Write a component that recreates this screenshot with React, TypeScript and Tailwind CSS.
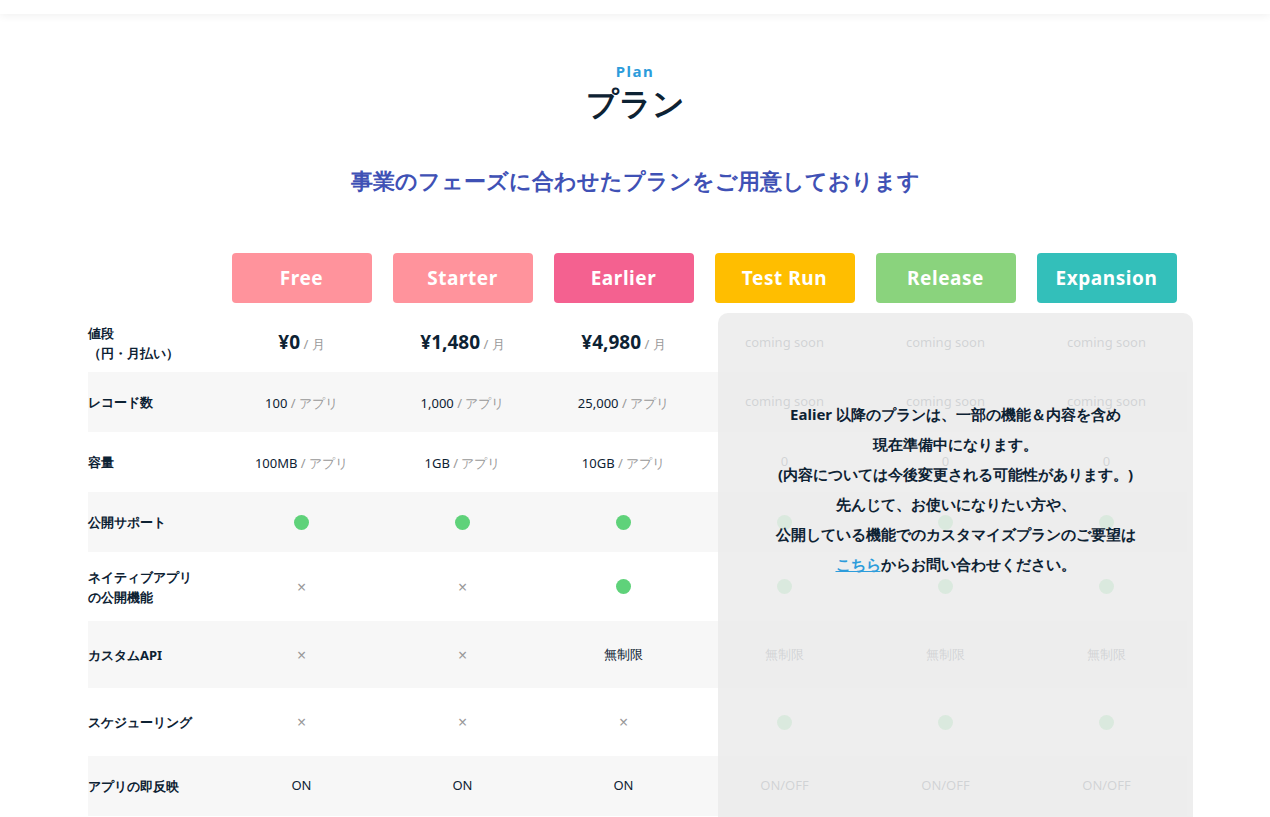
const font = "[font-family:Roboto,'Noto_Sans_CJK_JP',sans-serif]";

const plans = [
  { name: 'Free', color: 'bg-[#ff939c]' },
  { name: 'Starter', color: 'bg-[#ff939c]' },
  { name: 'Earlier', color: 'bg-[#f46190]' },
  { name: 'Test Run', color: 'bg-[#ffbe00]' },
  { name: 'Release', color: 'bg-[#8ad37d]' },
  { name: 'Expansion', color: 'bg-[#33bfba]' },
];

const Dot = () => <span className="inline-block size-[15px] rounded-full bg-[#5fd27a]" />;
const X = () => <span className="text-[16px] text-[#9a9a9a]">×</span>;
const Unit = ({ v, u, big }: { v: string; u: string; big?: boolean }) => (
  <span>
    <span className={big ? 'text-[19px] font-bold text-[#0d2233]' : 'text-[13px] text-[#0d2233]'}>{v}</span>
    <span className="text-[13px] text-[#999]"> / {u}</span>
  </span>
);
const Txt = ({ t }: { t: string }) => <span className="text-[13px] text-[#0d2233]">{t}</span>;
const Soon = () => <span className="text-[13px] text-[#0d2233]">coming soon</span>;

const rows: { label: React.ReactNode; h: string; cells: React.ReactNode[] }[] = [
  {
    label: <>値段<br />（円・月払い）</>, h: 'h-[59px]',
    cells: [<Unit v="¥0" u="月" big />, <Unit v="¥1,480" u="月" big />, <Unit v="¥4,980" u="月" big />, <Soon />, <Soon />, <Soon />],
  },
  {
    label: 'レコード数', h: 'h-[60px]',
    cells: [<Unit v="100" u="アプリ" />, <Unit v="1,000" u="アプリ" />, <Unit v="25,000" u="アプリ" />, <Soon />, <Soon />, <Soon />],
  },
  {
    label: '容量', h: 'h-[60px]',
    cells: [<Unit v="100MB" u="アプリ" />, <Unit v="1GB" u="アプリ" />, <Unit v="10GB" u="アプリ" />, <Txt t="0" />, <Txt t="0" />, <Txt t="0" />],
  },
  { label: '公開サポート', h: 'h-[60px]', cells: [<Dot />, <Dot />, <Dot />, <Dot />, <Dot />, <Dot />] },
  {
    label: <>ネイティブアプリ<br />の公開機能</>, h: 'h-[69px]',
    cells: [<X />, <X />, <Dot />, <Dot />, <Dot />, <Dot />],
  },
  {
    label: 'カスタムAPI', h: 'h-[67px]',
    cells: [<X />, <X />, <Txt t="無制限" />, <Txt t="無制限" />, <Txt t="無制限" />, <Txt t="無制限" />],
  },
  { label: 'スケジューリング', h: 'h-[68px]', cells: [<X />, <X />, <X />, <Dot />, <Dot />, <Dot />] },
  { label: 'アプリの即反映', h: 'h-[60px]', cells: [<Txt t="ON" />, <Txt t="ON" />, <Txt t="ON" />, <Txt t="ON/OFF" />, <Txt t="ON/OFF" />, <Txt t="ON/OFF" />] },
];

export default function App() {
  return (
    <div className={`${font} w-[1270px] h-[817px] overflow-hidden bg-white`}>
      <div className="h-[14px] shadow-[0_2px_8px_rgba(0,0,0,0.06)]" />
      <div className="flex flex-col items-center">
        <p className="mt-[47px] text-[15px] font-bold tracking-[0.1em] text-[#2d9cdb] leading-[20px]">Plan</p>
        <h1 className="mt-[2px] text-[32px] font-bold text-[#0d2233] leading-[40px]">プラン</h1>
        <p className="mt-[42px] text-[22px] font-bold text-[#3f51b5] leading-[30px]">事業のフェーズに合わせたプランをご用意しております</p>
      </div>
      <div className="ml-[88px] mt-[58px] w-[1099px] relative">
        <div className="grid grid-cols-[133px_repeat(6,161px)] mb-[10px]">
          <div />
          {plans.map((p) => (
            <div key={p.name} className="flex justify-center">
              <div className={`${p.color} w-[140px] h-[50px] rounded-[4px] flex items-center justify-center text-white text-[19px] font-bold tracking-[0.03em]`}>
                {p.name}
              </div>
            </div>
          ))}
        </div>
        {rows.map((r, i) => (
          <div key={i} className={`grid grid-cols-[133px_repeat(6,161px)] ${r.h} ${i % 2 === 1 ? 'bg-[#f7f7f7]' : ''}`}>
            <div className="flex items-center text-[13px] font-bold text-[#0d2233] leading-[20px]">{r.label}</div>
            {r.cells.map((c, j) => (
              <div key={j} className="flex items-center justify-center">{c}</div>
            ))}
          </div>
        ))}
        <div className="absolute left-[630px] top-[60px] w-[475px] h-[520px] rounded-[10px] bg-[rgba(236,236,236,0.88)] flex flex-col items-center pt-[86px] text-[15px] font-bold text-[#0d2233] leading-[30px] text-center">
          <p>Ealier 以降のプランは、一部の機能＆内容を含め</p>
          <p>現在準備中になります。</p>
          <p>(内容については今後変更される可能性があります。)</p>
          <p>先んじて、お使いになりたい方や、</p>
          <p>公開している機能でのカスタマイズプランのご要望は</p>
          <p><a className="text-[#2d9cdb] underline">こちら</a>からお問い合わせください。</p>
        </div>
      </div>
    </div>
  );
}
